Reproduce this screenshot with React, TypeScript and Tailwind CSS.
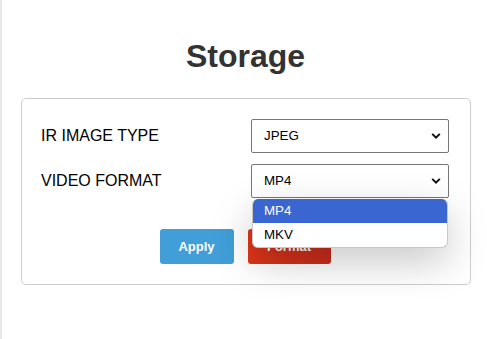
import React from "react"

const Chevron: React.FC = () => (
    <svg className="pointer-events-none absolute right-[8px] top-1/2 -translate-y-1/2" width="10" height="7" viewBox="0 0 10 7">
        <path d="M1.2 1.4 L5 5.2 L8.8 1.4" fill="none" stroke="#111" strokeWidth="2" />
    </svg>
)

const SelectRow: React.FC<{ label: string; value: string; open?: boolean }> = ({ label, value, open }) => {
    return (
        <div className="flex items-center justify-between h-[34px]">
            <span className="text-[16px] text-black">{label}</span>
            <div className="relative w-[198px] h-[34px]">
                <div className="h-full border border-[#767676] rounded-[2px] bg-white flex items-center pl-[12px] text-[13.33px] text-black">
                    {value}
                </div>
                <Chevron />
                {open && (
                    <div className="absolute left-px right-px top-[35px] z-10 rounded-[6px] overflow-hidden bg-white border border-[#c8c8c8] border-t-0 shadow-[0_14px_40px_rgba(0,0,0,0.22)] text-[13.33px]">
                        <div className="h-[24px] flex items-center pl-[11px] bg-[#3966d0] text-white">MP4</div>
                        <div className="h-[24px] flex items-center pl-[11px] text-black">MKV</div>
                    </div>
                )}
            </div>
        </div>
    )
}

export default function App() {
    return (
        <div className="min-h-[339px] bg-white border-l-2 border-[#e8e8e8] pl-[19px] pr-[17px] pt-[38px] font-['Liberation_Sans',Arial,sans-serif]">
            <h1 className="text-center text-[32px] leading-[37px] font-bold text-[#333]">Storage</h1>
            <div className="mt-[23px] w-[450px] border border-[#cccccc] rounded-[5px] pl-[19px] pr-[21px] pt-[20px] pb-[20px]">
                <div className="flex flex-col gap-[11px]">
                    <SelectRow label="IR IMAGE TYPE" value="JPEG" />
                    <SelectRow label="VIDEO FORMAT" value="MP4" open />
                </div>
                <div className="mt-[31px] flex justify-center gap-[14px]">
                    <button className="w-[74px] h-[35px] rounded-[3px] bg-[#419ed8] text-white text-[13px] font-bold">Apply</button>
                    <button className="w-[83px] h-[35px] rounded-[3px] bg-linear-to-r from-[#de3618] to-[#c82c1b] text-white text-[13px] font-bold">Format</button>
                </div>
            </div>
        </div>
    )
}
